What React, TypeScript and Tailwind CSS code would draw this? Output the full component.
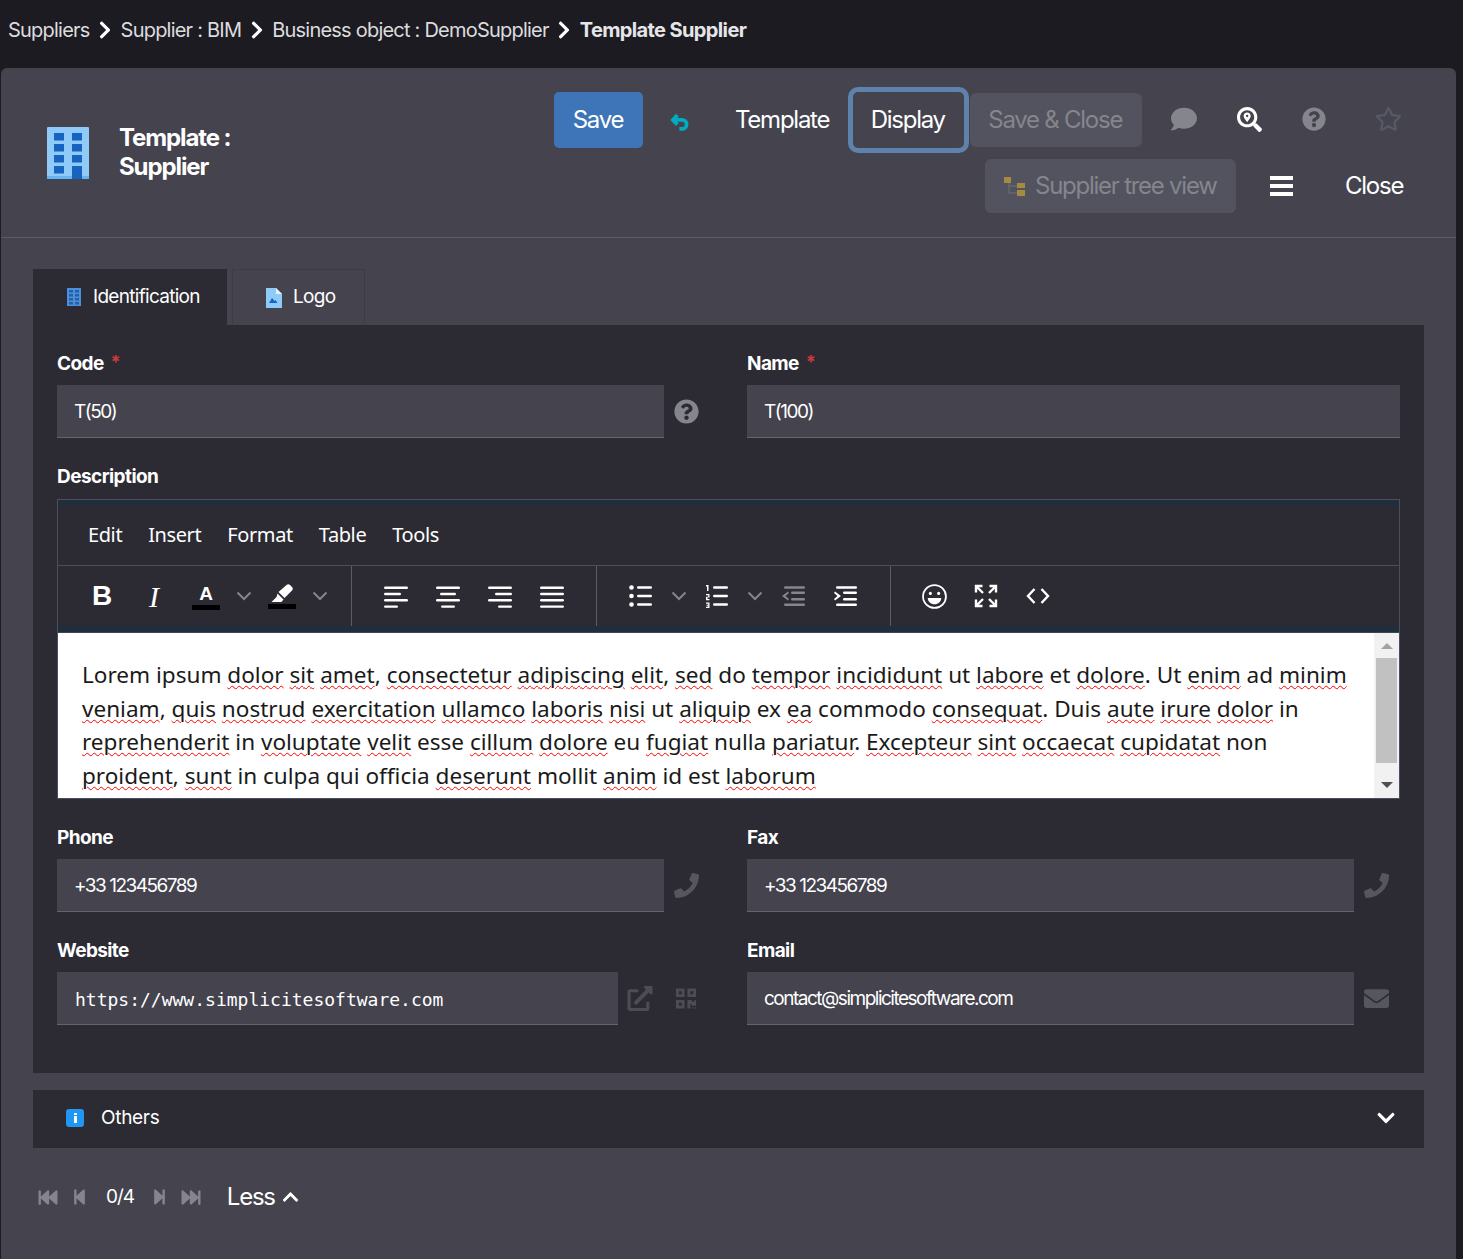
import type { ReactNode } from "react";
import {
  FaChevronDown,
  FaChevronRight,
  FaChevronUp,
  FaComment,
  FaEnvelope,
  FaExternalLinkAlt,
  FaFastBackward,
  FaFastForward,
  FaPhone,
  FaQrcode,
  FaQuestionCircle,
  FaRegStar,
  FaSearchLocation,
  FaStepBackward,
  FaStepForward,
} from "react-icons/fa";

const crumbs = ["Suppliers", "Supplier : BIM", "Business object : DemoSupplier"];

const loremLines = [
  [["Lorem ipsum "], ["dolor", 1], [" "], ["sit", 1], [" "], ["amet", 1], [", "], ["consectetur", 1], [" "], ["adipiscing", 1], [" "], ["elit", 1], [", "], ["sed", 1], [" do "], ["tempor", 1], [" "], ["incididunt", 1], [" ut "], ["labore", 1], [" et "], ["dolore", 1], [". Ut "], ["enim", 1], [" ad "], ["minim", 1]],
  [["veniam", 1], [", "], ["quis", 1], [" "], ["nostrud", 1], [" "], ["exercitation", 1], [" "], ["ullamco", 1], [" "], ["laboris", 1], [" "], ["nisi", 1], [" ut "], ["aliquip", 1], [" ex "], ["ea", 1], [" commodo "], ["consequat", 1], [". Duis "], ["aute", 1], [" "], ["irure", 1], [" "], ["dolor", 1], [" in"]],
  [["reprehenderit", 1], [" in "], ["voluptate", 1], [" "], ["velit", 1], [" esse "], ["cillum", 1], [" "], ["dolore", 1], [" eu "], ["fugiat", 1], [" nulla "], ["pariatur", 1], [". "], ["Excepteur", 1], [" "], ["sint", 1], [" "], ["occaecat", 1], [" "], ["cupidatat", 1], [" non"]],
  [["proident", 1], [", "], ["sunt", 1], [" in culpa qui officia "], ["deserunt", 1], [" mollit "], ["anim", 1], [" id est "], ["laborum", 1]],
] as [string, number?][][];

const BuildingIcon = ({ className }: { className: string }) => (
  <svg viewBox="0 0 42 52" className={className}>
    <rect width="42" height="52" rx="1" fill="#90caf9" />
    <rect y="49" width="42" height="3" fill="#64b5f6" />
    {[6, 17, 28, 39].map((y) =>
      [7, 25].map((x) => <rect key={`${x}-${y}`} x={x} y={y} width="10" height="7.500" fill="#1565c0" />),
    )}
    <rect x="25" y="39" width="10" height="13" fill="#1565c0" />
  </svg>
);

const TbIcon = ({ children, w = "w-[52px]" }: { children: ReactNode; w?: string }) => (
  <div className={`flex ${w} shrink-0 items-center justify-center`}>{children}</div>
);

const Caret = () => (
  <TbIcon w="w-[24px]">
    <svg viewBox="0 0 16 10" className="h-[10px] w-[16px]" fill="none" stroke="#84848c" strokeWidth="2">
      <path d="M1.5 1.5 8 8l6.5-6.5" />
    </svg>
  </TbIcon>
);

const Lines = ({ rows, color = "white" }: { rows: [number, number][]; color?: string }) => (
  <svg viewBox="0 0 24 24" className="h-6 w-6" fill={color}>
    {rows.map(([x, w], i) => (
      <rect key={i} x={x} y={2.5 + i * 6.3} width={w} height="2.4" rx="1.2" />
    ))}
  </svg>
);

const ToolGroup = ({ children, className }: { children: ReactNode; className: string }) => (
  <div className={`flex h-full items-center border-r border-[#5c5c66] ${className}`}>{children}</div>
);

const Field = ({
  label,
  required,
  value,
  mono,
  inputClass = "w-full",
  icons,
}: {
  label: string;
  required?: boolean;
  value: string;
  mono?: boolean;
  inputClass?: string;
  icons?: ReactNode;
}) => (
  <div>
    <div className="flex h-[22px] items-center pt-[2px] text-[19px] font-bold tracking-[-0.6px] text-white">
      {label}
      {required && <span className="ml-[7px] -mt-[6px] text-[18px] font-bold text-[#c93a3a]">*</span>}
    </div>
    <div className="mt-[11px] flex h-[53px] items-center">
      <div
        className={`flex h-full items-center border-b border-[#64636e] bg-[#44434e] pl-[18px] pt-[2px] text-white ${inputClass} ${
          mono ? "font-['DejaVu_Sans_Mono'] text-[18px]" : "text-[19px] tracking-[-1.5px]"
        }`}
      >
        <span className={mono ? "" : "-ml-px"}>{value}</span>
      </div>
      {icons}
    </div>
  </div>
);

export default function App() {
  return (
    <div className="flex min-h-[1259px] flex-col overflow-hidden bg-[#1c1b22] font-['Inter','Liberation_Sans',sans-serif] text-white">
      <nav className="flex h-[68px] items-center pb-[8px] pl-2 text-[20px] tracking-[-0.78px] text-[#dcdcdf]">
        {crumbs.map((c) => (
          <span key={c} className="flex items-center">
            {c}
            <FaChevronRight className="mx-[8.5px] h-[20px] w-[14px] text-white" />
          </span>
        ))}
        <span className="font-bold tracking-[-0.62px] text-[#e6e6e8]">Template Supplier</span>
      </nav>

      <main className="ml-px mr-[7px] h-[1191px] rounded-t-[6px] bg-[#44434e]">
        <header className="flex h-[170px] border-b border-[#5c5b66]">
          <div className="flex w-[553px] items-start pl-[46px] pt-[59px]">
            <BuildingIcon className="h-[52px] w-[42px] shrink-0" />
            <h1 className="ml-[30px] -mt-[4px] text-[24px] font-bold leading-[29px] tracking-[-1.1px]">
              Template :<br />
              Supplier
            </h1>
          </div>
          <div className="flex-1">
            <div className="flex h-[91px] items-start pt-[19px] text-[24px] tracking-[-1.25px]">
              <button className="mt-[5px] h-[56px] w-[89px] rounded-[5px] bg-[#3d75b8] pr-[1px]">Save</button>
              <svg viewBox="0 0 20 20" className="ml-[27px] mt-[25px] h-[21px] w-[21px]" fill="none" stroke="#00acc1" strokeWidth="3.6">
                <path d="M7 3 2.800 7.500 7 12" />
                <path d="M3 7.500h8.500a4.300 4.300 0 0 1 4.300 4.300v0a4.300 4.300 0 0 1-4.300 4.300H9" />
              </svg>
              <span className="ml-[44px] mt-[15px] leading-[36px]">Template</span>
              <button className="ml-[19px] h-[66px] w-[121px] rounded-[10px] border-[5px] border-[#5f82ad] pr-[2px]">Display</button>
              <button className="ml-[1px] mt-[6px] h-[54px] w-[172px] rounded-[6px] bg-[#52535e] pr-[2px] text-[#85858d]">Save &amp; Close</button>
              <FaComment className="ml-[29px] mt-[19px] h-[26px] w-[26px] text-[#85858d]" />
              <FaSearchLocation className="ml-[40px] mt-[20px] h-[25px] w-[25px] text-white" />
              <FaQuestionCircle className="ml-[40px] mt-[20px] h-[24px] w-[24px] text-[#85858d]" />
              <FaRegStar className="ml-[49px] mt-[19px] h-[26px] w-[27px] text-[#565a66]" />
            </div>
            <div className="flex h-[54px] items-center text-[24px] tracking-[-1.25px]">
              <button className="ml-[431px] flex h-[54px] w-[251px] items-center rounded-[6px] bg-[#52535e] pl-[19px] text-[#85858d]">
                <svg viewBox="0 0 22 20" className="mr-[9px] h-[20px] w-[22px]">
                  <path d="M5 6v11h8M5 10h8" fill="none" stroke="#70707a" strokeWidth="1" />
                  <rect x="0" y="1" width="7" height="6" fill="#a68a3f" />
                  <rect x="13" y="7" width="8" height="5" fill="#a68a3f" />
                  <rect x="13" y="14" width="8" height="6" fill="#a68a3f" />
                </svg>
                Supplier tree view
              </button>
              <div className="ml-[34px] flex w-[23px] flex-col gap-[4px]">
                <span className="h-[4px] bg-white" />
                <span className="h-[4px] bg-white" />
                <span className="h-[4px] bg-white" />
              </div>
              <span className="ml-[52px]">Close</span>
            </div>
          </div>
        </header>

        <section className="ml-[32px] mr-[32px] mt-[31px]">
          <div className="flex h-[56px] items-stretch text-[19px] tracking-[-0.7px]">
            <div className="flex w-[194px] items-center bg-[#2c2b34] pl-[34px]">
              <svg viewBox="0 0 14 18" className="mr-[12px] h-[18px] w-[14px]">
                <rect width="14" height="18" fill="#4a90e2" />
                {[2, 6, 10, 14].map((y) =>
                  [2, 8].map((x) => <rect key={`${x}-${y}`} x={x} y={y} width="4" height="2.500" fill="#2c5f9e" />),
                )}
              </svg>
              Identification
            </div>
            <div className="ml-[5px] flex w-[133px] items-center border border-b-0 border-[#3c3b46] pl-[33px]">
              <svg viewBox="0 0 16 20" className="mr-[11px] h-[20px] w-[16px]">
                <path d="M0 0h10l6 6v14H0z" fill="#90caf9" />
                <path d="M10 0l6 6h-6z" fill="#e3f2fd" />
                <path d="M3 15l3-5 2.500 3 1-1 2 3z" fill="#1565c0" />
              </svg>
              Logo
            </div>
          </div>

          <div className="h-[748px] bg-[#2c2b34] px-[24px] pt-[27px]">
            <div className="grid grid-cols-[642px_653px] gap-x-[48px]">
              <Field
                label="Code"
                required
                value="T(50)"
                inputClass="w-[607px]"
                icons={<FaQuestionCircle className="ml-[10px] h-[25px] w-[25px] text-[#85858d]" />}
              />
              <Field label="Name" required value="T(100)" />
            </div>

            <div className="mt-[28px] flex h-[22px] items-center text-[19px] font-bold tracking-[-0.55px]">Description</div>
            <div className="mt-[11px] w-[1343px] border border-[#46505e] font-['Noto_Sans',sans-serif]">
              <div className="h-[5px] bg-[#1f2d3d]" />
              <div className="flex h-[61px] items-center gap-[26px] border-b border-[#4a4f5c] pl-[30px] text-[20px] tracking-[-0.4px] text-white">
                <span>Edit</span>
                <span>Insert</span>
                <span>Format</span>
                <span>Table</span>
                <span>Tools</span>
              </div>
              <div className="flex h-[60px] items-center">
                <ToolGroup className="w-[294px] pl-[18px]">
                  <TbIcon>
                    <span className="font-['Liberation_Sans'] text-[28px] font-bold">B</span>
                  </TbIcon>
                  <TbIcon>
                    <span className="font-['Liberation_Serif'] text-[30px] italic">I</span>
                  </TbIcon>
                  <TbIcon>
                    <span className="flex w-[28px] flex-col items-center border-b-[5px] border-black font-['Liberation_Sans'] text-[19px] font-bold leading-[22px]">
                      A
                    </span>
                  </TbIcon>
                  <Caret />
                  <TbIcon>
                    <span className="flex w-[28px] justify-center border-b-[5px] border-black">
                      <svg viewBox="0 0 24 20" className="h-[20px] w-[25px]" fill="white">
                        <path d="M8 8 16 1c1-1 2.500-1 3.500 0l2 2c1 1 1 2.500 0 3.500L14 14z" />
                        <path d="M7 9.500l6 6-2 2.500H1l5-5z" />
                      </svg>
                    </span>
                  </TbIcon>
                  <Caret />
                </ToolGroup>
                <ToolGroup className="w-[245px] pl-[18px]">
                  <TbIcon><Lines rows={[[0, 24], [0, 17], [0, 24], [0, 14]]} /></TbIcon>
                  <TbIcon><Lines rows={[[0, 24], [4, 16], [0, 24], [5, 14]]} /></TbIcon>
                  <TbIcon><Lines rows={[[0, 24], [7, 17], [0, 24], [10, 14]]} /></TbIcon>
                  <TbIcon><Lines rows={[[0, 24], [0, 24], [0, 24], [0, 24]]} /></TbIcon>
                </ToolGroup>
                <ToolGroup className="w-[294px] pl-[18px]">
                  <TbIcon>
                    <svg viewBox="0 0 24 24" className="h-6 w-6" fill="white">
                      <circle cx="2.500" cy="3.500" r="2.300" />
                      <circle cx="2.500" cy="12" r="2.300" />
                      <circle cx="2.500" cy="20.500" r="2.300" />
                      <rect x="8" y="2.300" width="15" height="2.400" rx="1.200" />
                      <rect x="8" y="10.800" width="15" height="2.400" rx="1.200" />
                      <rect x="8" y="19.300" width="15" height="2.400" rx="1.200" />
                    </svg>
                  </TbIcon>
                  <Caret />
                  <TbIcon>
                    <svg viewBox="0 0 24 24" className="h-6 w-6" fill="white">
                      <path d="M1 1h2.500v6H2V2.500H1z" />
                      <path d="M1 10h3.500v3.500H2.500V15h2v1.200H1v-3.500h2.200v-1.500H1z" />
                      <path d="M1 18.500h3.500v5.500H1v-1.200h2.200v-1H1.500v-1h1.700v-1H1z" />
                      <rect x="8" y="2.300" width="15" height="2.400" rx="1.200" />
                      <rect x="8" y="10.800" width="15" height="2.400" rx="1.200" />
                      <rect x="8" y="19.300" width="15" height="2.400" rx="1.200" />
                    </svg>
                  </TbIcon>
                  <Caret />
                  <TbIcon>
                    <svg viewBox="0 0 24 24" className="h-6 w-6" fill="#85858d">
                      <rect x="3" y="2.300" width="21" height="2.400" rx="1.200" />
                      <rect x="10" y="7.500" width="14" height="2.400" rx="1.200" />
                      <rect x="10" y="14" width="14" height="2.400" rx="1.200" />
                      <rect x="3" y="19.500" width="21" height="2.400" rx="1.200" />
                      <path d="M7 7.500 1 12l6 4.500 1-1.500L4.500 12 8 9z" />
                    </svg>
                  </TbIcon>
                  <TbIcon>
                    <svg viewBox="0 0 24 24" className="h-6 w-6" fill="white">
                      <rect x="3" y="2.300" width="21" height="2.400" rx="1.200" />
                      <rect x="10" y="7.500" width="14" height="2.400" rx="1.200" />
                      <rect x="10" y="14" width="14" height="2.400" rx="1.200" />
                      <rect x="3" y="19.500" width="21" height="2.400" rx="1.200" />
                      <path d="M2 7.500 8 12l-6 4.500-1-1.500L4.500 12 1 9z" />
                    </svg>
                  </TbIcon>
                </ToolGroup>
                <div className="flex pl-[17px]">
                  <TbIcon>
                    <svg viewBox="0 0 24 24" className="h-[25px] w-[25px]" fill="none" stroke="white" strokeWidth="1.700">
                      <circle cx="12" cy="12" r="11" />
                      <circle cx="8" cy="9" r="1.500" fill="white" stroke="none" />
                      <circle cx="16" cy="9" r="1.500" fill="white" stroke="none" />
                      <path d="M5.500 13.500h13c0 3.500-3 6-6.500 6s-6.500-2.500-6.500-6z" fill="white" stroke="none" />
                    </svg>
                  </TbIcon>
                  <TbIcon>
                    <svg viewBox="0 0 24 24" className="h-6 w-6" fill="none" stroke="white" strokeWidth="2.400">
                      <path d="M2 8.500V2h6.500M2.500 2.500 9 9M22 8.500V2h-6.500M21.500 2.500 15 9M2 15.500V22h6.500M2.500 21.500 9 15M22 15.500V22h-6.500M21.500 21.500 15 15" />
                    </svg>
                  </TbIcon>
                  <TbIcon>
                    <svg viewBox="0 0 24 24" className="h-6 w-6" fill="none" stroke="white" strokeWidth="2.400">
                      <path d="M8.500 5 2 12l6.500 7M15.500 5 22 12l-6.500 7" />
                    </svg>
                  </TbIcon>
                </div>
              </div>
              <div className="h-[7px] border-b border-[#3a4452] bg-[#1f2d3d]" />
              <div className="flex h-[165px] bg-white">
                <div className="min-w-0 flex-1 whitespace-pre pl-[24px] pt-[25px] text-[22.55px] leading-[33.6px] text-[#1a1a1a]">
                  {loremLines.map((line, i) => (
                    <div key={i}>
                      {line.map(([t, wavy], j) =>
                        wavy ? (
                          <span
                            key={j}
                            className="underline decoration-[#ff0000] decoration-wavy decoration-1 underline-offset-[2px]"
                          >
                            {t}
                          </span>
                        ) : (
                          <span key={j}>{t}</span>
                        ),
                      )}
                    </div>
                  ))}
                </div>
                <div className="flex w-[25px] shrink-0 flex-col items-center bg-[#f1f1f1]">
                  <div className="mt-[10px] h-0 w-0 border-x-[6px] border-b-[6px] border-x-transparent border-b-[#a3a3a3]" />
                  <div className="mt-[9px] h-[105px] w-[21px] bg-[#c1c1c1]" />
                  <div className="mt-[19px] h-0 w-0 border-x-[6px] border-t-[6px] border-x-transparent border-t-[#505050]" />
                </div>
              </div>
            </div>

            <div className="mt-[27px] grid grid-cols-[642px_653px] gap-x-[48px] gap-y-[27px]">
              <Field
                label="Phone"
                value="+33 123456789"
                inputClass="w-[607px]"
                icons={<FaPhone className="ml-[10px] h-[25px] w-[25px] text-[#56565e]" />}
              />
              <Field
                label="Fax"
                value="+33 123456789"
                inputClass="w-[607px]"
                icons={<FaPhone className="ml-[10px] h-[25px] w-[25px] text-[#56565e]" />}
              />
              <Field
                label="Website"
                value="https://www.simplicitesoftware.com"
                mono
                inputClass="w-[561px]"
                icons={
                  <>
                    <FaExternalLinkAlt className="ml-[9px] h-[25px] w-[26px] text-[#4c4c54]" />
                    <FaQrcode className="ml-[21px] h-[23px] w-[24px] text-[#4c4c54]" />
                  </>
                }
              />
              <Field
                label="Email"
                value="contact@simplicitesoftware.com"
                inputClass="w-[607px]"
                icons={<FaEnvelope className="ml-[10px] h-[25px] w-[25px] text-[#56565e]" />}
              />
            </div>
          </div>

          <div className="mt-[17px] flex h-[58px] items-center justify-between bg-[#2c2b34] pb-[2px] pl-[33px] pr-[28px] text-[19px] tracking-[-0.3px]">
            <div className="flex items-center">
              <span className="mr-[17px] flex h-[18px] w-[18px] items-center justify-center rounded-[3px] bg-[#2196f3]">
                <span className="flex h-[10px] w-[3px] flex-col gap-[1px]">
                  <span className="h-[2px] bg-white" />
                  <span className="h-[7px] bg-white" />
                </span>
              </span>
              Others
            </div>
            <FaChevronDown className="h-[20px] w-[20px] text-white" />
          </div>

          <footer className="mt-[36px] flex h-[26px] items-center pl-[5px] text-[19px] tracking-[-1.1px]">
            <FaFastBackward className="h-[19px] w-[20px] text-[#85858d]" />
            <FaStepBackward className="ml-[14px] h-[20px] w-[15px] text-[#85858d]" />
            <span className="ml-[19px]">0/4</span>
            <FaStepForward className="ml-[18px] h-[20px] w-[15px] text-[#85858d]" />
            <FaFastForward className="ml-[14px] h-[19px] w-[20px] text-[#85858d]" />
            <span className="ml-[26px] text-[24px] tracking-[-1.25px]">Less</span>
            <FaChevronUp className="ml-[7px] h-[18px] w-[17px] text-white" />
          </footer>
        </section>
      </main>
    </div>
  );
}
